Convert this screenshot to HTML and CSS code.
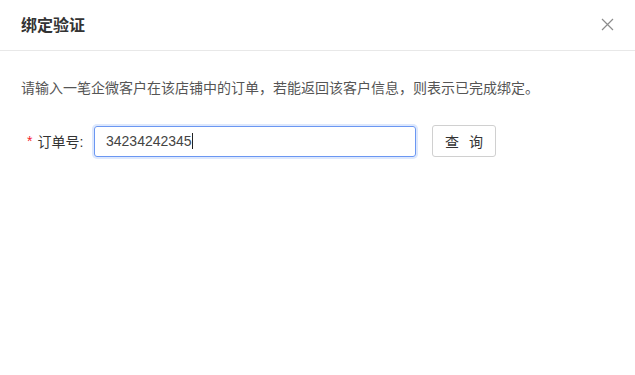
FILE: index.html
```html
<!DOCTYPE html>
<html lang="zh-CN">
<head>
<meta charset="utf-8">
<title>绑定验证</title>
<link rel="stylesheet" href="styles.css">
</head>
<body>
<div class="dialog">
  <div class="header">
    <span class="title">绑定验证</span>
    <span class="close" aria-label="关闭">
      <svg width="13" height="13" viewBox="0 0 13 13"><path d="M1 1 L12 12 M12 1 L1 12" stroke="#8c8c8c" stroke-width="1.2" fill="none"/></svg>
    </span>
  </div>
  <div class="body">
    <p class="desc">请输入一笔企微客户在该店铺中的订单，若能返回该客户信息，则表示已完成绑定。</p>
    <div class="form-row">
      <label class="label"><span class="req">*</span>订单号:</label>
      <div class="input"><span class="value">34234242345</span><span class="caret"></span></div>
      <button class="btn">查 询</button>
    </div>
  </div>
</div>
</body>
</html>
```

FILE: styles.css
```css
html, body {
  margin: 0;
  padding: 0;
  background: #fff;
}
body {
  font-family: "Helvetica Neue", "Liberation Sans", "Noto Sans CJK SC", sans-serif;
  color: #333;
}
.dialog {
  width: 635px;
  height: 375px;
}
.header {
  height: 51px;
  box-sizing: border-box;
  border-bottom: 1px solid #e8e8e8;
  display: flex;
  align-items: center;
  justify-content: space-between;
  padding: 0 21px 2px 21px;
}
.title {
  font-size: 16px;
  font-weight: 600;
  color: #333;
}
.close {
  display: flex;
  margin-top: 1px;
}
.body {
  padding: 27px 21px 0 21px;
}
.desc {
  margin: 0;
  font-size: 14px;
  line-height: 20px;
  color: #555;
}
.form-row {
  display: flex;
  align-items: center;
  margin-top: 27px;
}
.label {
  font-size: 14px;
  color: #333;
  width: 73px;
  box-sizing: border-box;
  padding-left: 6px;
  display: flex;
  align-items: center;
}
.req {
  color: #f5222d;
  margin-right: 5px;
  font-family: "Liberation Sans", sans-serif;
}
.input {
  width: 322px;
  height: 31px;
  box-sizing: border-box;
  border: 1px solid #6b97f2;
  border-radius: 3px;
  box-shadow: 0 0 0 2px #dde8fd;
  display: flex;
  align-items: center;
  padding-left: 11px;
  font-size: 14px;
  color: #444;
}
.caret {
  display: inline-block;
  width: 1px;
  height: 16px;
  background: #222;
}
.btn {
  margin-left: 16px;
  width: 64px;
  height: 32px;
  border: 1px solid #d0d0d0;
  border-radius: 3px;
  background: #fff;
  font-family: inherit;
  font-size: 14px;
  color: #333;
  letter-spacing: 3px;
  padding: 0 0 0 3px;
}
```
